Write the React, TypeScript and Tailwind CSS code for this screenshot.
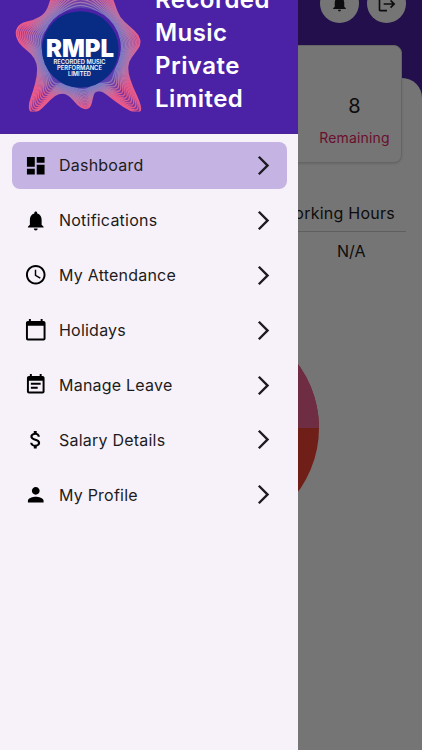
import React from 'react';
import {
    MdDashboard,
    MdNotifications,
    MdAccessTime,
    MdCalendarToday,
    MdEventNote,
    MdAttachMoney,
    MdPerson,
    MdLogout,
    MdArrowForwardIos,
} from 'react-icons/md';
import type { IconType } from 'react-icons';

interface MenuItem {
    label: string;
    icon: IconType;
    active?: boolean;
}

const menuItems: MenuItem[] = [
    { label: 'Dashboard', icon: MdDashboard, active: true },
    { label: 'Notifications', icon: MdNotifications },
    { label: 'My Attendance', icon: MdAccessTime },
    { label: 'Holidays', icon: MdCalendarToday },
    { label: 'Manage Leave', icon: MdEventNote },
    { label: 'Salary Details', icon: MdAttachMoney },
    { label: 'My Profile', icon: MdPerson },
];

type Point = [number, number];

// Outline of the outermost ring of the logo
const outerRing: Point[] = [
    [80, -36], [96, -28], [108, -12], [114, 4], [119, 18], [129, 27], [138, 35],
    [140.5, 44], [134, 53], [128, 61], [127, 72], [132, 87], [139, 102], [141, 111],
    [136, 113], [123, 106], [111, 97], [102, 90], [94, 91], [92, 98], [90, 107],
    [85, 109], [78, 105], [71, 96], [63, 92], [54, 95], [46, 103], [38, 111],
    [31, 113], [29, 105], [34, 91], [38, 76], [38, 63], [32, 53], [20, 44],
    [15.5, 33], [20, 24], [34, 21], [46, 14], [51, 1], [54, -12], [65, -28],
];

const center: Point = [81, 49];
const coreRadius = 38;
const ringCount = 14;

// Blends the outer ring towards the core circle, t = 0 outer, t = 1 core
const ringPath = (t: number) => {
    const pts = outerRing.map(([x, y]): Point => {
        const angle = Math.atan2(y - center[1], x - center[0]);
        const cx = center[0] + coreRadius * Math.cos(angle);
        const cy = center[1] + coreRadius * Math.sin(angle);
        return [x + (cx - x) * t, y + (cy - y) * t];
    });
    const mid = (a: Point, b: Point) => `${(a[0] + b[0]) / 2} ${(a[1] + b[1]) / 2}`;
    const last = pts[pts.length - 1];
    const curves = pts.map((p, i) => `Q${p[0]} ${p[1]} ${mid(p, pts[(i + 1) % pts.length])}`);
    return `M${mid(last, pts[0])} ${curves.join(' ')}Z`;
};

const Logo: React.FC = () => (
    <svg width="155" height="134" viewBox="0 0 155 134" className="shrink-0">
        <defs>
            <radialGradient id="ring" gradientUnits="userSpaceOnUse" cx="81" cy="49" r="74">
                <stop offset="0.54" stopColor="#7a7cc4" />
                <stop offset="0.66" stopColor="#b474a8" />
                <stop offset="0.8" stopColor="#e85a8a" />
            </radialGradient>
            <clipPath id="logoBounds">
                <rect width="155" height="111.5" />
            </clipPath>
        </defs>
        <g clipPath="url(#logoBounds)">
            <path d={ringPath(0)} fill="url(#ring)" fillOpacity="0.35" />
            {Array.from({ length: ringCount }, (_, i) => (
                <path
                    key={i}
                    d={ringPath((i / ringCount) * 0.94)}
                    fill="none"
                    stroke="url(#ring)"
                    strokeWidth={i === 0 ? 1.8 : 1.25}
                />
            ))}
        </g>
        <circle cx="81.3" cy="47.5" r="39.5" fill="#4a22a6" />
        <circle cx="80.3" cy="49.5" r="38.3" fill="#082c84" />
        <g fill="#fff" textAnchor="middle" fontFamily="Inter, sans-serif">
            <text
                x="80"
                y="57"
                fontSize="24.5"
                fontWeight="900"
                textLength="68"
                lengthAdjust="spacingAndGlyphs"
            >
                RMPL
            </text>
            <g fontSize="5.6" fontWeight="600">
                <text x="79.5" y="64.2" textLength="52" lengthAdjust="spacingAndGlyphs">RECORDED MUSIC</text>
                <text x="79.5" y="70.2" textLength="45" lengthAdjust="spacingAndGlyphs">PERFORMANCE</text>
                <text x="79.5" y="76" textLength="23" lengthAdjust="spacingAndGlyphs">LIMITED</text>
            </g>
        </g>
    </svg>
);

const HomePage: React.FC = () => (
    <div className="h-full bg-[#4b22a5] overflow-hidden">
        <div className="flex justify-end gap-2 h-[78px] pr-4 -mt-4">
            <div className="w-[39px] h-[39px] rounded-full bg-white flex items-center justify-center">
                <MdNotifications size={19} />
            </div>
            <div className="w-[39px] h-[39px] rounded-full bg-white flex items-center justify-center">
                <MdLogout size={20} />
            </div>
        </div>
        <div className="mt-4 h-[672px] bg-white rounded-t-[20px] px-5">
            <div className="relative -top-[33.5px] h-[118px] rounded-lg bg-white border border-[#ddd] shadow-sm flex justify-end">
                <div className="w-[93px] flex flex-col items-center pt-[46px]">
                    <span className="text-[20px] leading-7">8</span>
                    <span className="text-[14px] leading-5 mt-2 tracking-[0.15px] text-[#e91e63]">Remaining</span>
                </div>
            </div>
            <div className="-mx-1 pt-[5px] pl-[230px]">
                <div className="h-[31px] text-[16px] leading-6 tracking-[0.25px] pr-[11px] text-right whitespace-nowrap border-b border-[#cfcfcf]">
                    Working Hours
                </div>
                <div className="pt-[7px] pl-[91px] text-[16px] leading-6">N/A</div>
            </div>
            <svg width="216" height="216" viewBox="0 0 216 216" className="mx-auto mt-[57px]">
                <circle cx="108" cy="108" r="108" fill="#f44336" />
                <path d="M0 108a108 108 0 0 1 216 0z" fill="#f06292" />
            </svg>
        </div>
    </div>
);

const Drawer: React.FC = () => (
    <aside className="absolute inset-y-0 left-0 w-[298px] bg-[#f7f2fa] overflow-hidden">
        <div className="flex h-[134px] bg-[#4b22a5] border-b border-[#4a2496]">
            <Logo />
            <h1 className="-mt-[17.5px] text-[24px] leading-[33.3px] font-semibold tracking-[0.45px] text-white">
                Recorded
                <br />
                Music
                <br />
                Private
                <br />
                Limited
            </h1>
        </div>
        <nav className="flex flex-col gap-2 pt-2 pl-3 pr-[11.5px]">
            {menuItems.map(({ label, icon: Icon, active }) => (
                <a
                    key={label}
                    className={`flex items-center h-[46.9px] pl-[11.5px] pr-3 rounded-lg text-[#1d1b20] ${active ? 'bg-[#c5b4e3]' : ''}`}
                >
                    <Icon size={23.5} color="#000" />
                    <span className="ml-3 text-[16px] tracking-[0.22px]">{label}</span>
                    <MdArrowForwardIos size={23} className="ml-auto" />
                </a>
            ))}
        </nav>
    </aside>
);

export default function App() {
    return (
        <div className="relative w-[422px] h-[750px] overflow-hidden font-['Inter',sans-serif] text-[#1d1b20]">
            <HomePage />
            {/* Scrim */}
            <div className="absolute inset-0 bg-black/54" />
            <Drawer />
        </div>
    );
}
